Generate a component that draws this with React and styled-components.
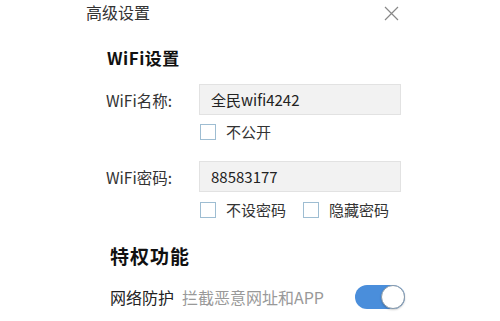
import React, { useState } from 'react'
import styled, { createGlobalStyle } from 'styled-components'

const GlobalStyle = createGlobalStyle`
  body {
    margin: 0;
    background: #fff;
    font-family: "Noto Sans CJK SC", "Noto Sans", sans-serif;
  }
`;

const Panel = styled.div`
  width: 500px;
  height: 321px;
  background: #fff;
  overflow: hidden;
`;

const Header = styled.div`
  display: flex;
  align-items: center;
  justify-content: space-between;
  width: 313px;
  height: 24px;
  margin-left: 86px;
`;

const Title = styled.div`
  font-size: 16px;
  line-height: 24px;
  color: #333;
`;

const Close = styled.div`
  width: 15px;
  height: 15px;
  margin-top: -6px;
  color: #888;
`;

const SectionTitle = styled.div`
  margin: ${p => p.top}px 0 0 ${p => p.left}px;
  font-size: ${p => p.size}px;
  line-height: 22px;
  font-weight: 700;
  color: #111;
  letter-spacing: ${p => p.spacing || 0}px;
`;

const FieldRow = styled.div`
  display: flex;
  align-items: center;
  margin-top: ${p => p.top}px;
  padding-left: 106px;
`;

const Label = styled.div`
  width: 93px;
  font-size: 15.5px;
  color: #333;
`;

const Input = styled.input`
  box-sizing: border-box;
  width: 202px;
  height: 31px;
  padding: 0 11px;
  border: 1px solid #e2e2e2;
  background: #f2f2f2;
  font-family: inherit;
  font-size: 15px;
  color: #222;
  outline: none;
`;

const CheckRow = styled.div`
  display: flex;
  gap: 17px;
  margin-top: ${p => p.top}px;
  padding-left: 200px;
`;

const Check = styled.label`
  display: flex;
  align-items: center;
  gap: 10px;
  font-size: 15px;
  line-height: 16px;
  color: #333;
`;

const Box = styled.span`
  box-sizing: border-box;
  width: 16px;
  height: 16px;
  border: 1px solid #9ebdd2;
  background: #fff;
`;

const FeatureRow = styled.div`
  display: flex;
  align-items: center;
  margin-top: 18px;
  padding-left: 110px;
`;

const FeatureName = styled.span`
  font-size: 16px;
  color: #222;
`;

const FeatureDesc = styled.span`
  margin-left: 8px;
  width: 173px;
  font-size: 16px;
  color: #999;
`;

const Toggle = styled.div`
  position: relative;
  width: 50px;
  height: 24px;
  border-radius: 12px;
  background: ${p => (p.on ? '#4a8edb' : '#ccc')};
`;

const Knob = styled.div`
  position: absolute;
  top: 0;
  right: ${p => (p.on ? '0' : '26px')};
  box-sizing: border-box;
  width: 24px;
  height: 24px;
  border-radius: 50%;
  background: #fff;
  border: 1px solid #8a9aa8;
  box-shadow: 0 1px 2px rgba(0, 0, 0, 0.2);
`;

const CheckItem = ({ children }) => (
  <Check>
    <Box />
    {children}
  </Check>
);

export default function App() {
  const [ssid, setSsid] = useState('全民wifi4242');
  const [pwd, setPwd] = useState('88583177');
  const [on, setOn] = useState(true);

  return (
    <Panel>
      <GlobalStyle />
      <Header>
        <Title>高级设置</Title>
        <Close>
          <svg width="15" height="15" viewBox="0 0 15 15">
            <path d="M1 1L14 14M14 1L1 14" stroke="currentColor" strokeWidth="1.2" />
          </svg>
        </Close>
      </Header>

      <SectionTitle top={23} left={107} size={17} spacing={0.5}>WiFi设置</SectionTitle>

      <FieldRow top={15}>
        <Label>WiFi名称:</Label>
        <Input value={ssid} onChange={e => setSsid(e.target.value)} />
      </FieldRow>
      <CheckRow top={9}>
        <CheckItem>不公开</CheckItem>
      </CheckRow>

      <FieldRow top={21}>
        <Label>WiFi密码:</Label>
        <Input value={pwd} onChange={e => setPwd(e.target.value)} />
      </FieldRow>
      <CheckRow top={10}>
        <CheckItem>不设密码</CheckItem>
        <CheckItem>隐藏密码</CheckItem>
      </CheckRow>

      <SectionTitle top={27} left={110} size={19} spacing={1}>特权功能</SectionTitle>

      <FeatureRow>
        <FeatureName>网络防护</FeatureName>
        <FeatureDesc>拦截恶意网址和APP</FeatureDesc>
        <Toggle on={on} onClick={() => setOn(!on)}>
          <Knob on={on} />
        </Toggle>
      </FeatureRow>
    </Panel>
  );
}
